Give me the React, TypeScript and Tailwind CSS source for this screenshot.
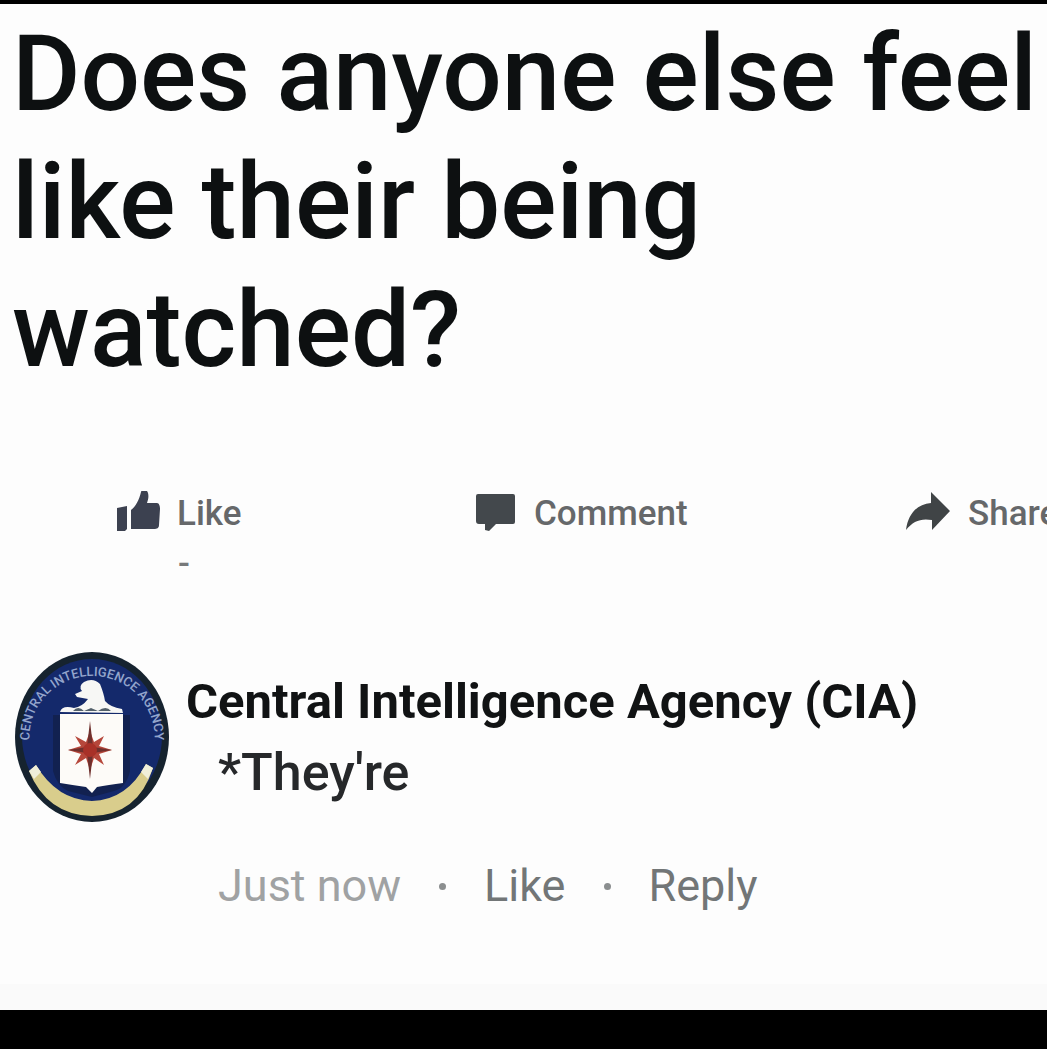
import React from "react";

function ThumbIcon() {
  return (
    <svg className="w-[44px] h-[46px] shrink-0" viewBox="0 0 44 46" fill="#3c4150" aria-hidden="true">
      <path d="M1 17 L11 15 V38 L9 40 H1 Z" />
      <path d="M15 19 C20 15 23 9 25 1 C26 -3 31 -2 32 2 C33 6 32 9 31 12 L41 12 C43 12 44 15 44 18 L43 34 C43 37 41 38 38 38 H15 Z" />
    </svg>
  );
}

function CommentIcon() {
  return (
    <svg className="w-[42px] h-[46px] shrink-0" viewBox="0 0 42 46" fill="#43484c" aria-hidden="true">
      <path d="M3 3 H38 Q40 3 40 5 V31 Q40 33 38 33 H21 L14 40 L10 39 V33 H4 Q1 33 1 30 V5 Q1 3 3 3 Z" />
    </svg>
  );
}

function ShareIcon() {
  return (
    <svg className="w-[46px] h-[46px] shrink-0" viewBox="0 0 46 46" fill="#404446" aria-hidden="true">
      <path d="M26 1 L45 20 L27 39 V29 C16 27 8 30 1 39 C3 23 12 13 26 12 Z" />
    </svg>
  );
}

function Seal() {
  return (
    <svg className="w-[156px] h-[172px] shrink-0" viewBox="0 0 156 172" role="img" aria-label="Central Intelligence Agency seal">
      <defs>
        <path id="sealArc" d="M22 120 C0 66 36 25 78 25 C120 25 156 66 134 120" />
      </defs>
      <ellipse cx="78" cy="86" rx="77" ry="85" fill="#16232f" />
      <ellipse cx="78" cy="85" rx="70" ry="77" fill="#14296b" />
      <text className="font-[Roboto,sans-serif] text-[13px] font-medium" fill="#93a5cb">
        <textPath href="#sealArc" startOffset="50%" textAnchor="middle">CENTRAL INTELLIGENCE AGENCY</textPath>
      </text>
      <path d="M30 128 Q46 151 78 151 Q112 151 128 126 L134 133 Q114 164 78 165 Q42 164 23 134 Z" fill="#1b2626" />
      <path d="M15 120 L22 114 Q43 149 78 150 Q113 149 132 113 L139 117 Q124 164 78 165 Q33 164 15 120 Z" fill="#d9cd8c" />
      <path d="M15 120 L22 114 L27 121 L20 128 Z M132 113 L139 117 L134 128 L127 121 Z" fill="#f0efda" />
      <path d="M39 64 H116 V120 Q112 137 100 140 L78 146 L54 140 Q43 135 39 120 Z" fill="#122150" />
      <path d="M46 61 Q48 54 60 57 Q68 56 74 48 L63 46 L61 43 L68 40 Q64 35 70 31 Q79 26 86 33 Q90 43 91 50 Q96 56 108 58 L109 62 Z" fill="#f7f7f5" />
      <path d="M59 60 Q64 54 70 60 L77 57 L84 60 Q92 54 97 60 Z" fill="#53606a" />
      <path d="M46 63 H109 V132 Q94 134 83 136 L78 142 L72 136 Q58 134 46 132 Z" fill="#fdfbf8" />
      <path d="M76 80 L80 91 L90 85 L85 95 L98 99 L85 103 L90 114 L80 107 L76 119 L72 107 L61 114 L67 103 L54 99 L67 95 L61 85 L72 91 Z" fill="#b6473b" />
      <path d="M76 70 L79 96 L98 99 L79 102 L76 128 L73 102 L54 99 L73 96 Z" fill="#6f302d" />
      <circle cx="76" cy="99" r="7" fill="#a83128" />
    </svg>
  );
}

function Dot() {
  return <span className="mx-[38px] size-[7px] rounded-full bg-[#8b8e8f]" />;
}

export default function App() {
  const actionClassName = "flex min-w-0 items-center gap-[17px] self-start text-[35px] leading-[46px] font-medium text-[#66686a] whitespace-nowrap";

  return (
    <div className="flex min-h-screen flex-col overflow-hidden border-t-4 border-black bg-[#fdfdfd] font-[Roboto,sans-serif]">
      <main className="flex-1">
        <h1 className="pl-3 pt-[7px] text-[105px] leading-[128px] font-medium text-[#0d1011]">
          Does anyone else feel like their being watched?
        </h1>

        <div className="mt-24 grid grid-cols-[359fr_430fr_142fr] pl-[116px]">
          <div className="min-w-0">
            <button type="button" className={actionClassName}><ThumbIcon />Like</button>
            <p className="pl-[62px] pt-1 text-[35px] leading-[46px] font-medium text-[#77797a]">-</p>
          </div>
          <button type="button" className={actionClassName}><CommentIcon />Comment</button>
          <button type="button" className={actionClassName}><ShareIcon />Share</button>
        </div>

        <article className="mt-16 flex gap-4 pl-[14px]">
          <Seal />
          <div className="pt-5">
            <h2 className="text-[49px] leading-[62px] font-bold text-[#111314] whitespace-nowrap">Central Intelligence Agency (CIA)</h2>
            <p className="pl-8 text-[52px] leading-[80px] font-medium text-[#26282a]">*They're</p>
            <div className="mt-[42px] flex items-center pl-8 text-[45px] leading-[62px] text-[#727677]">
              <span className="text-[#a0a2a3]">Just now</span>
              <Dot />
              <button type="button">Like</button>
              <Dot />
              <button type="button">Reply</button>
            </div>
          </div>
        </article>
      </main>
      <div className="h-[26px] bg-[#fafafa]" />
      <footer className="h-[39px] bg-black" />
    </div>
  );
}
